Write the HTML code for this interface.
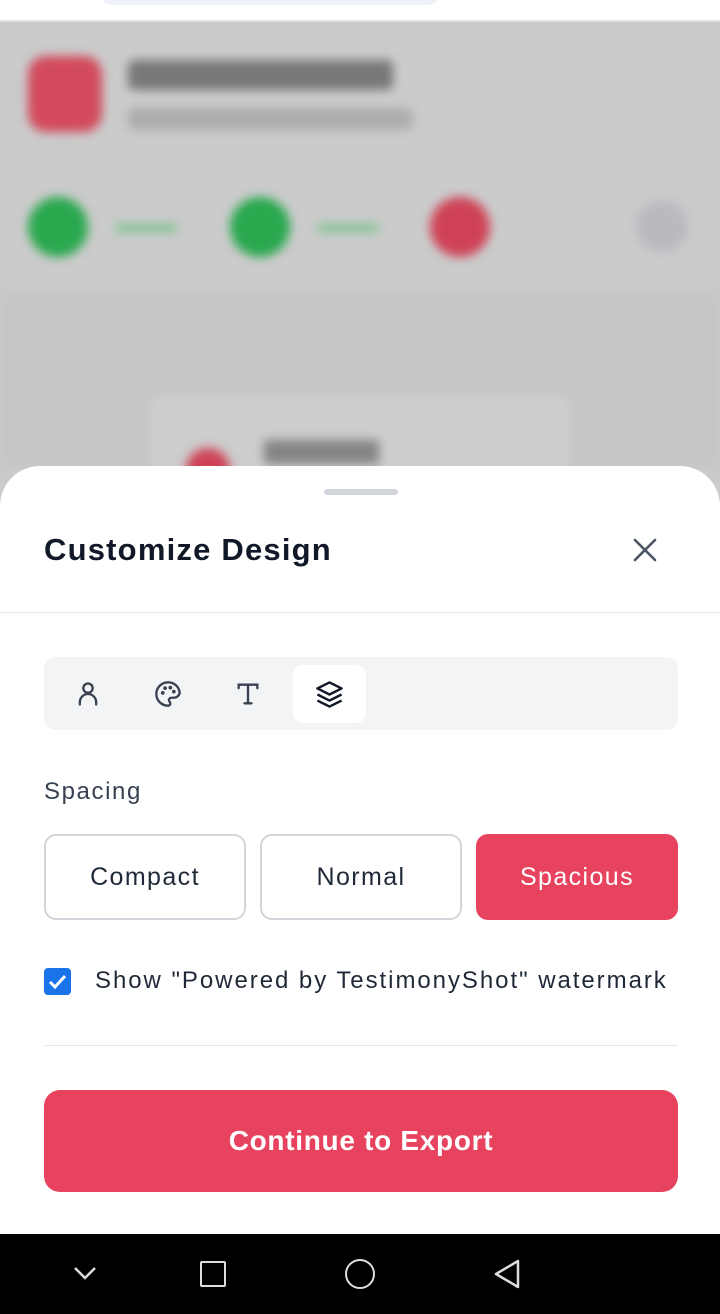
<!DOCTYPE html>
<html><head><meta charset="utf-8"><style>
*{box-sizing:border-box;margin:0;padding:0}
body{width:720px;height:1314px;overflow:hidden;position:relative;background:#cbcbcb;font-family:"Liberation Sans",sans-serif}
.top{position:absolute;left:0;top:0;width:720px;height:22px;background:#fff;border-bottom:2px solid #e3e3e3}
.pill{position:absolute;left:100px;top:-20px;width:340px;height:25px;border-radius:14px;background:#eef1f8}
.bg{position:absolute;filter:blur(5px)}
.sheet{position:absolute;left:0;top:466px;width:720px;height:768px;background:#fff;border-radius:40px 40px 0 0}
.nav{position:absolute;left:0;top:1234px;width:720px;height:80px;background:#000}
.btn{position:absolute;top:834px;height:86px;border-radius:12px;font-size:25px;letter-spacing:1.4px;display:flex;align-items:center;justify-content:center}
</style></head><body>
<div class="top"><div class="pill"></div></div>
<div class="bg" style="left:28px;top:56px;width:74px;height:76px;border-radius:18px;background:#d24a5c"></div>
<div class="bg" style="left:128px;top:60px;width:265px;height:30px;background:#555;border-radius:6px;opacity:.7"></div>
<div class="bg" style="left:128px;top:108px;width:285px;height:22px;background:#999;border-radius:6px;opacity:.6"></div>
<div class="bg" style="left:28px;top:197px;width:60px;height:60px;border-radius:50%;background:#2aa84e"></div>
<div class="bg" style="left:116px;top:224px;width:60px;height:8px;background:#7ec28e"></div>
<div class="bg" style="left:230px;top:197px;width:60px;height:60px;border-radius:50%;background:#2aa84e"></div>
<div class="bg" style="left:318px;top:224px;width:60px;height:8px;background:#7ec28e"></div>
<div class="bg" style="left:430px;top:197px;width:60px;height:60px;border-radius:50%;background:#cf4256"></div>
<div class="bg" style="left:636px;top:200px;width:52px;height:52px;border-radius:50%;background:#b8bac0"></div>
<div class="bg" style="left:0;top:290px;width:720px;height:180px;background:#c5c6c8"></div>
<div class="bg" style="left:150px;top:395px;width:420px;height:90px;background:#cdcdcd;border-radius:10px"></div>
<div class="bg" style="left:186px;top:448px;width:44px;height:44px;border-radius:50%;background:#cf4256"></div>
<div class="bg" style="left:264px;top:440px;width:115px;height:24px;background:#666;opacity:.7"></div>
<div class="sheet">
 <div style="position:absolute;left:324px;top:23px;width:74px;height:6px;border-radius:3px;background:#d1d5db"></div>
 <div style="position:absolute;left:44px;top:66px;font-size:31px;font-weight:600;letter-spacing:1.2px;color:#111827">Customize Design</div>
 <svg style="position:absolute;left:632px;top:71px" width="26" height="26" viewBox="0 0 26 26"><path d="M3 3L23 23M23 3L3 23" stroke="#4b5563" stroke-width="2.6" stroke-linecap="round"/></svg>
 <div style="position:absolute;left:0;top:146px;width:720px;height:1px;background:#e5e7eb"></div>
 <div style="position:absolute;left:44px;top:191px;width:634px;height:73px;border-radius:12px;background:#f3f4f6"></div>
 <div style="position:absolute;left:293px;top:199px;width:73px;height:58px;border-radius:10px;background:#fff"></div>
 <svg style="position:absolute;left:74px;top:214px" width="28" height="28" viewBox="0 0 24 24" fill="none" stroke="#374151" stroke-width="2" stroke-linecap="round" stroke-linejoin="round"><circle cx="12" cy="7" r="4"/><path d="M5 21v-2a7 7 0 0 1 14 0v2"/></svg>
 <svg style="position:absolute;left:154px;top:214px" width="28" height="28" viewBox="0 0 24 24" fill="none" stroke="#374151" stroke-width="2" stroke-linecap="round" stroke-linejoin="round"><path d="M12 2a10 10 0 0 0 0 20c1.4 0 2-1 2-2 0-.6-.3-1-.6-1.4-.3-.4-.6-.8-.6-1.4 0-1.1.9-2 2-2h2.3A5.9 5.9 0 0 0 22 11.5C22 6.2 17.5 2 12 2z"/><circle cx="7.5" cy="11" r=".6" fill="#374151"/><circle cx="9.5" cy="7" r=".6" fill="#374151"/><circle cx="14" cy="6.5" r=".6" fill="#374151"/><circle cx="17" cy="10" r=".6" fill="#374151"/></svg>
 <svg style="position:absolute;left:234px;top:214px" width="28" height="28" viewBox="0 0 24 24" fill="none" stroke="#374151" stroke-width="2" stroke-linecap="round"><path d="M4 7V4h16v3M12 4v16M9 20h6"/></svg>
 <svg style="position:absolute;left:315px;top:214px" width="29" height="29" viewBox="0 0 24 24" fill="none" stroke="#111827" stroke-width="2" stroke-linejoin="round"><path d="M12 2L2 7l10 5 10-5-10-5z"/><path d="M2 12l10 5 10-5M2 17l10 5 10-5"/></svg>
 <div style="position:absolute;left:44px;top:312px;font-size:24px;letter-spacing:1.6px;color:#374151">Spacing</div>
</div>
<div class="btn" style="left:44px;width:202px;border:2px solid #d1d5db;color:#1f2937">Compact</div>
<div class="btn" style="left:260px;width:202px;border:2px solid #d1d5db;color:#1f2937">Normal</div>
<div class="btn" style="left:476px;width:202px;background:#e8435e;color:#fff">Spacious</div>
<div style="position:absolute;left:44px;top:968px;width:27px;height:27px;border-radius:4px;background:#1a73e8"><svg width="27" height="27" viewBox="0 0 27 27"><path d="M6 14l5 5 10-11" stroke="#fff" stroke-width="3" fill="none"/></svg></div>
<div style="position:absolute;left:95px;top:967px;font-size:24px;letter-spacing:1.95px;color:#1f2937;white-space:nowrap">Show "Powered by TestimonyShot" watermark</div>
<div style="position:absolute;left:44px;top:1045px;width:634px;height:1px;background:#e5e7eb"></div>
<div style="position:absolute;left:44px;top:1090px;width:634px;height:102px;border-radius:16px;background:#e8435e;color:#fff;font-size:28px;font-weight:700;letter-spacing:0.7px;display:flex;align-items:center;justify-content:center">Continue to Export</div>
<div class="nav">
 <svg style="position:absolute;left:72px;top:26px" width="26" height="26" viewBox="0 0 26 26"><path d="M3 8l10 10 10-10" stroke="#ddd" stroke-width="2.5" fill="none"/></svg>
 <div style="position:absolute;left:200px;top:27px;width:26px;height:26px;border:2.5px solid #ddd;border-radius:2px"></div>
 <div style="position:absolute;left:345px;top:25px;width:30px;height:30px;border:2.5px solid #ddd;border-radius:50%"></div>
 <svg style="position:absolute;left:492px;top:24px" width="30" height="32" viewBox="0 0 30 32"><path d="M26 3L4 16l22 13z" stroke="#ddd" stroke-width="2.5" fill="none" stroke-linejoin="round"/></svg>
</div>
</body></html>
